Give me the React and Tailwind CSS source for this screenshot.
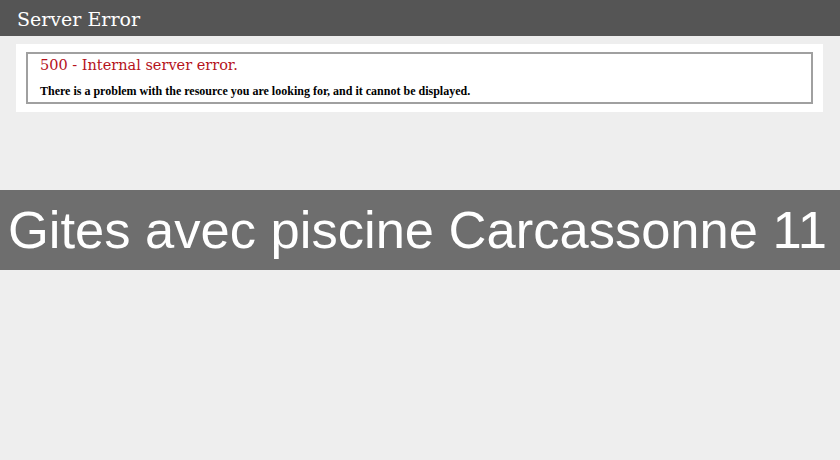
export default function App() {
  return (
    <div className="w-[840px] h-[460px] bg-[#eeeeee] overflow-hidden">
      {/* header */}
      <div className="h-9 bg-[#555555] pl-[17px] pt-[9px]">
        <h1 className="text-white text-[19px] leading-[20px] font-['DejaVu_Serif',serif]">
          Server Error
        </h1>
      </div>

      {/* error panel */}
      <div className="mt-2 mx-4 w-[807px] bg-white p-[8px_10px]">
        <div className="border-2 border-[#a0a0a0] h-[52px] pl-[12px] pt-[2px]">
          <p className="text-[#b5121b] text-[14.5px] leading-[18px] font-['DejaVu_Serif',serif]">
            500 - Internal server error.
          </p>
          <p className="text-black text-[12px] font-bold leading-[14px] mt-[10px] font-['Liberation_Serif',serif]">
            There is a problem with the resource you are looking for, and it cannot be displayed.
          </p>
        </div>
      </div>

      {/* banner */}
      <div className="mt-[78px] h-[80px] bg-[#6e6e6e] flex items-center pl-[8px]">
        <span className="text-white text-[52.5px] leading-none whitespace-nowrap font-['Liberation_Sans',Arial,sans-serif]">
          Gites avec piscine Carcassonne 11
        </span>
      </div>
    </div>
  );
}
